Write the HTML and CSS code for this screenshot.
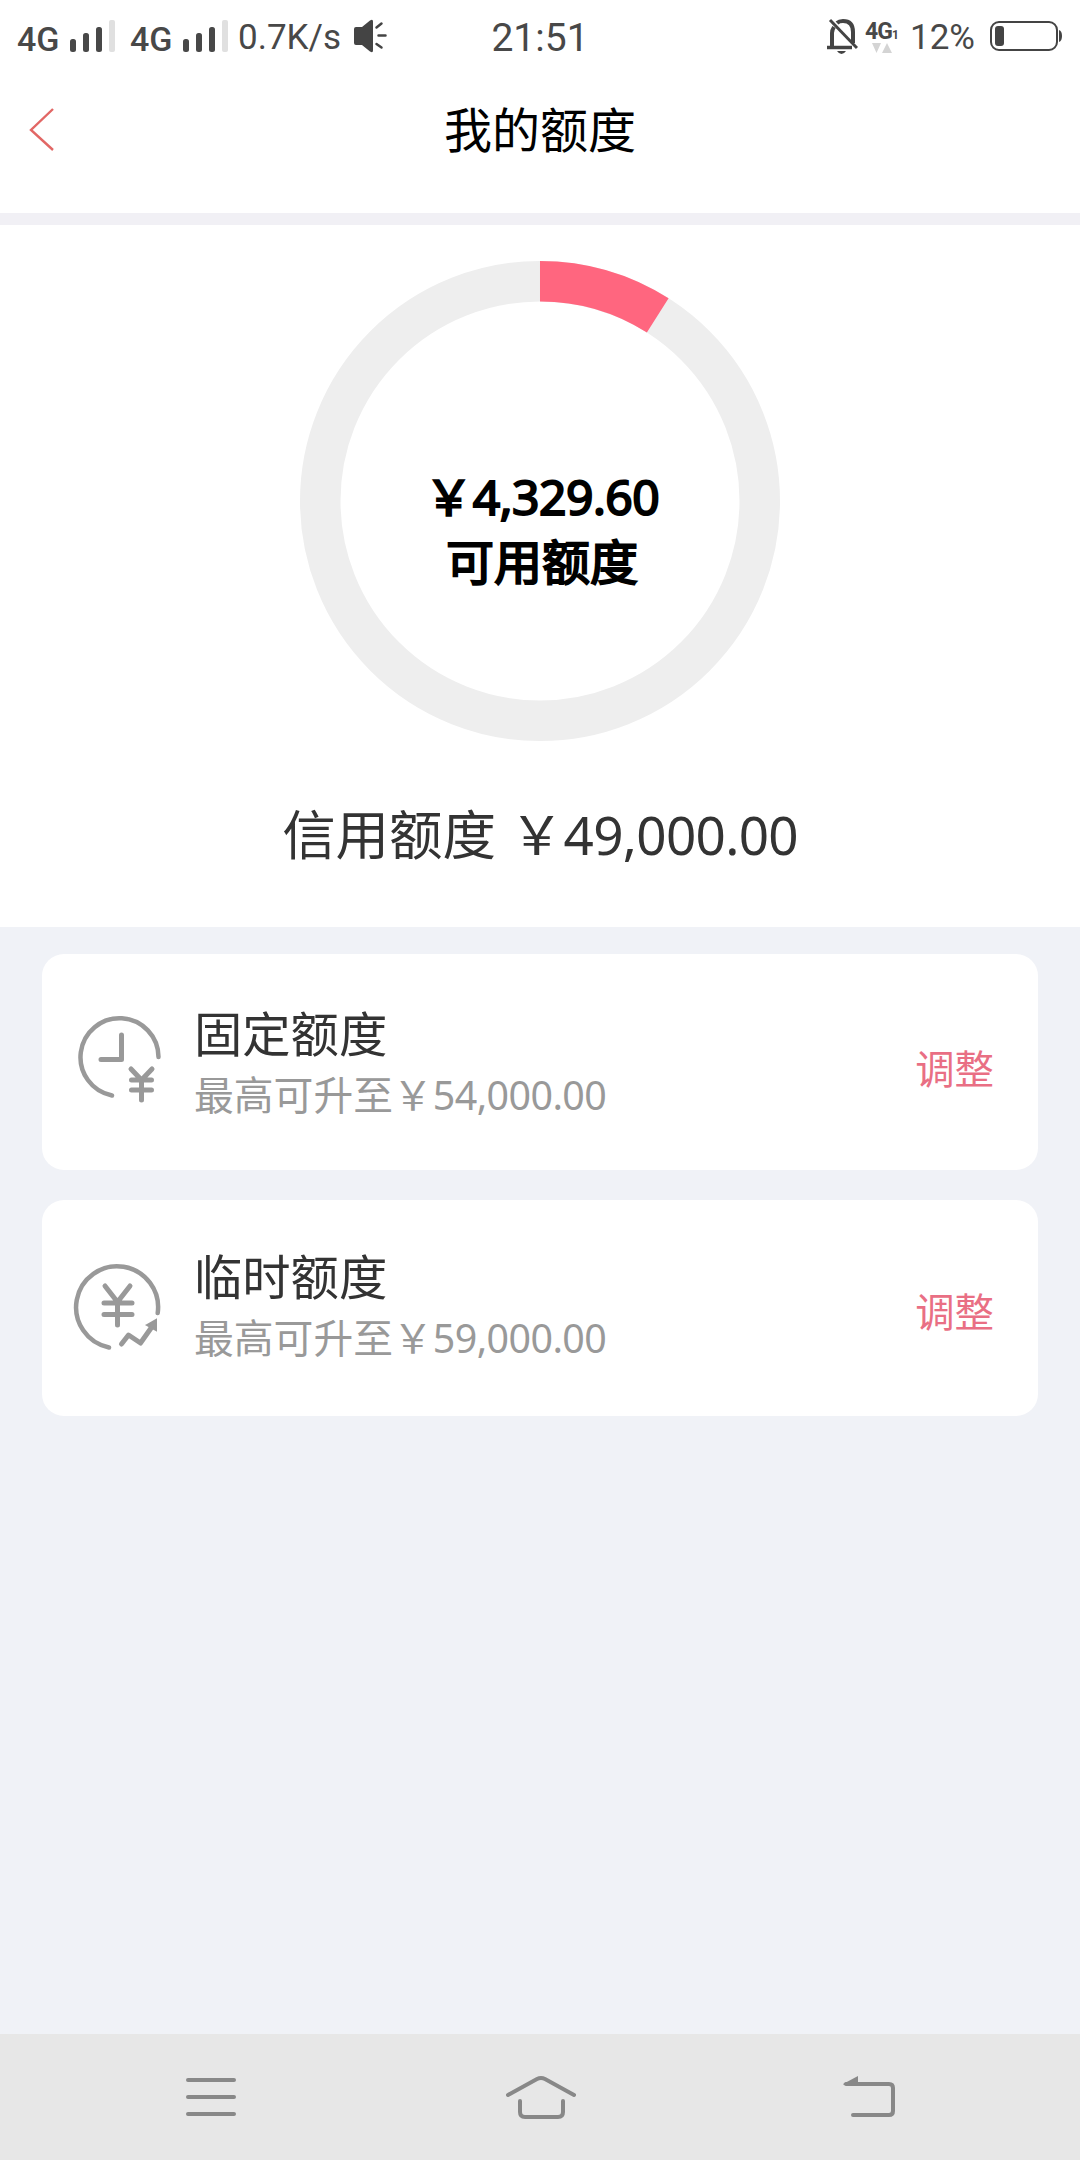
FILE: index.html
```
<!DOCTYPE html>
<html lang="zh-CN">
<head>
<meta charset="utf-8">
<title>我的额度</title>
<link rel="stylesheet" href="styles.css">
</head>
<body>
<div class="screen">
  <div class="status">
    <div class="status-left">
      <span class="network">4G</span>
      <svg class="signal" width="46" height="34" viewBox="0 0 46 34"><g fill="#484848"><rect y="20" width="6" height="13" rx="2.5"/><rect x="13" y="14" width="6" height="19" rx="2.5"/><rect x="26" y="8" width="6" height="25" rx="2.5"/></g><rect x="39" y="1" width="6" height="32" rx="2" fill="#e0e0e0"/></svg>
      <span class="network second">4G</span>
      <svg class="signal" width="46" height="34" viewBox="0 0 46 34"><g fill="#484848"><rect y="20" width="6" height="13" rx="2.5"/><rect x="13" y="14" width="6" height="19" rx="2.5"/><rect x="26" y="8" width="6" height="25" rx="2.5"/></g><rect x="39" y="1" width="6" height="32" rx="2" fill="#e0e0e0"/></svg>
      <span class="speed">0.7K/s</span>
      <svg class="speaker" width="34" height="34" viewBox="0 0 34 34"><path d="M2 8h6L16 1.500q3-2 3 1v29q0 3-3 1L8 26H2q-2 0-2-2V10q0-2 2-2z" fill="#444"/><path d="M22.500 8.500l5-4M24.500 16.500h7M22.500 25l5 3.500" fill="none" stroke="#444" stroke-width="2.500" stroke-linecap="round"/></svg>
    </div>
    <div class="clock">21:51</div>
    <div class="status-right">
      <svg width="31" height="36" viewBox="0 0 31 36"><g fill="none" stroke="#444" stroke-width="4"><path d="M5 29V15q0-3 2-6M10 5q2-2 6-2 10 0 10 11v11"/><path d="M0 29.500h25" stroke-width="3.500"/></g><path d="M3 2l27 28" stroke="#444" stroke-width="3"/><path d="M10 33h9q-2 3-4.500 3T10 33z" fill="#444"/></svg>
      <div class="data"><div class="data-label">4G<span class="sim">1</span></div><svg width="22" height="10" viewBox="0 0 22 10"><path d="M1 0h9L5.500 10zM11 10h10L16 0z" fill="#d4d4d4"/></svg></div>
      <span class="percent">12%</span>
      <svg class="battery" width="74" height="32" viewBox="0 0 74 32"><rect x="2" y="2" width="66" height="28" rx="8" fill="none" stroke="#444" stroke-width="2"/><rect x="6" y="6" width="9" height="20" rx="3" fill="#444"/><path d="M70 10q3 1 3 6t-3 6z" fill="#444"/></svg>
    </div>
  </div>
  <header class="header">
    <svg class="back" width="26" height="44" viewBox="0 0 26 44"><path d="M24 1L2 22l22 20" fill="none" stroke="#e26765" stroke-width="2.400"/></svg>
    <h1 class="title">我的额度</h1>
  </header>
  <section class="summary">
    <div class="ring">
      <svg class="ring-chart" width="480" height="480" viewBox="0 0 480 480"><g fill="none" stroke-width="40.500"><circle cx="240" cy="240" r="219.750" stroke="#eee"/><circle cx="240" cy="240" r="219.750" pathLength="100" stroke-dasharray="9 91" transform="rotate(-90 240 240)" stroke="#ff667f"/></g></svg>
      <div class="ring-text"><div>￥<span class="num">4,329.60</span></div><div>可用额度</div></div>
    </div>
    <div class="credit">信用额度 ￥<span class="num">49,000.00</span></div>
  </section>
  <main class="cards">
    <div class="card">
      <svg class="card-icon" width="90" height="90" viewBox="72 1014 90 90"><g fill="none" stroke="#999" stroke-width="4.500" stroke-linecap="round" stroke-linejoin="round"><path d="M158.500 1057A39 39 0 1 0 112 1095.500"/><path d="M121.500 1035v24.500h-20.500" stroke-width="5"/><path d="M131 1069l10.500 11 10.500-11M141.500 1080v20M131.500 1080h20M131.500 1090h20" stroke-width="5"/></g></svg>
      <div class="card-body"><div class="card-title">固定额度</div><div class="card-sub">最高可升至￥<span class="num">54,000.00</span></div></div>
      <div class="action">调整</div>
    </div>
    <div class="card raised">
      <svg class="card-icon" width="90" height="90" viewBox="72 1262 90 90"><g fill="none" stroke="#999" stroke-width="4.500" stroke-linecap="round" stroke-linejoin="round"><path d="M157.700 1313A41 41 0 1 0 109 1347.500"/><path d="M105 1286l12.500 16 12.500-16M117.500 1302v23M104 1303h28M104 1314.500h28" stroke-width="5"/><path d="M121.500 1344l7-9 12 8 12-17" stroke-width="5"/></g><path d="M147 1325l9-5v10z" fill="#999" stroke="#999" stroke-width="2"/></svg>
      <div class="card-body"><div class="card-title">临时额度</div><div class="card-sub">最高可升至￥<span class="num">59,000.00</span></div></div>
      <div class="action">调整</div>
    </div>
  </main>
  <nav class="nav">
    <svg width="52" height="44" viewBox="185 2075 52 44"><path d="M188 2080h46M188 2097h46M188 2114h46" stroke="#888" stroke-width="4" stroke-linecap="round"/></svg>
    <svg width="72" height="46" viewBox="504 2074 72 46"><g fill="none" stroke="#888" stroke-width="4" stroke-linecap="round"><path d="M508 2094L537 2078q4-2 8 0L574 2094M520 2100v11q0 5 5 5h33q5 0 5-5v-11"/></g></svg>
    <svg width="54" height="44" viewBox="842 2074 54 44"><path d="M846 2083h43q4 0 4 4v23q0 4-4 4H853" fill="none" stroke="#888" stroke-width="4" stroke-linecap="round"/><path d="M843 2083l15-8v9h-14z" fill="#888"/></svg>
  </nav>
</div>
</body>
</html>
```
FILE: styles.css
```
* { box-sizing: border-box; }
body {
  margin: 0;
  font-family: "Noto Sans", "Noto Sans CJK SC", sans-serif;
  color: #333;
}
svg { display: block; flex: none; }
.screen {
  display: flex;
  flex-direction: column;
  width: 1080px;
  height: 2160px;
  background: #f0f2f7;
}
.status {
  display: grid;
  grid-template-columns: 1fr 100px 1fr;
  height: 75px;
  background: #fff;
  color: #484848;
  font-family: Roboto, sans-serif;
  white-space: nowrap;
}
.status-left, .status-right { display: flex; align-items: flex-start; }
.status-left { padding: 19px 0 0 17px; }
.status-right { padding: 18px 17px 0 0; justify-content: flex-end; }
.network { width: 53px; font-size: 34px; line-height: 40px; font-weight: 500; }
.network.second { margin-left: 14px; }
.speed { width: 116px; margin-left: 9px; margin-top: -2px; font-size: 35px; line-height: 42px; }
.speaker { flex: none; }
.clock { padding-top: 14px; font-size: 39px; line-height: 48px; text-align: center; }
.data { width: 35px; margin-left: 7px; }
.data-label { height: 25px; font-size: 23px; line-height: 27px; font-weight: 700; letter-spacing: -1px; }
.data svg { margin-left: 6px; }
.sim { font-size: 12px; }
.percent { width: 79px; margin-left: 10px; margin-top: -1px; font-size: 35px; line-height: 42px; }
.battery { margin-top: 2px; }
.header {
  display: grid;
  grid-template-columns: 100px 1fr 100px;
  height: 150px;
  border-bottom: 12px solid #f1f0f5;
  background: #fff;
}
.back { margin: 33px 0 0 29px; }
.title {
  margin: 20px 0 0;
  color: #000;
  font-size: 48px;
  line-height: 70px;
  font-weight: 400;
  text-align: center;
}
.summary { height: 702px; padding-top: 36px; background: #fff; }
.ring { display: grid; width: 480px; height: 480px; margin: 0 auto; }
.ring-chart, .ring-text { grid-area: 1 / 1; }
.ring-text {
  padding: 203px 0 0 4px;
  color: #000;
  font-size: 48px;
  line-height: 65px;
  -webkit-text-stroke: 2px #000;
  text-align: center;
}
.ring-text .num { letter-spacing: -0.5px; }
.credit { margin-top: 57px; font-size: 53.500px; line-height: 74px; text-align: center; }
.credit .num { font-size: 53px; letter-spacing: -0.700px; }
.cards {
  display: flex;
  flex: 1;
  flex-direction: column;
  gap: 30px;
  padding: 27px 42px;
}
.card {
  display: flex;
  align-items: flex-start;
  height: 216px;
  padding-right: 44px;
  border-radius: 22px;
  background: #fff;
}
.card-icon { margin: 60px 0 0 30px; }
.raised .card-icon { margin-top: 62px; }
.card-body { flex: 1; margin: 46px 0 0 32px; }
.card-title { font-size: 48.300px; line-height: 66px; }
.card-sub { color: #999; font-size: 39.800px; line-height: 58px; }
.card-sub .num { font-size: 39.400px; letter-spacing: -0.600px; }
.action { margin-top: 86px; color: #e96f84; font-size: 39.400px; line-height: 58px; }
.raised .card-body { margin-top: 43px; }
.raised .action { margin-top: 83px; }
.nav {
  display: flex;
  justify-content: space-between;
  height: 126px;
  padding: 41px 184px 0 185px;
  background: #e7e7e7;
}
```
